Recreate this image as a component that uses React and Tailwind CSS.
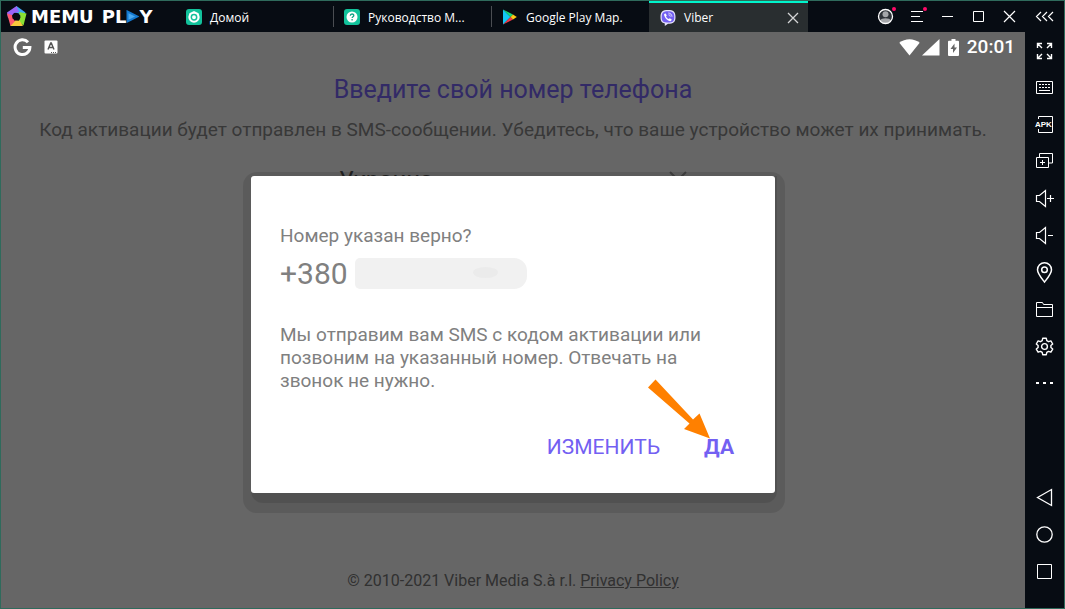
import React from 'react';

const SideIcon = ({ children }) => (
  <svg
    width="19"
    height="19"
    viewBox="0 0 19 19"
    fill="none"
    stroke="#fff"
    strokeWidth="1"
    className="overflow-visible"
    aria-hidden="true"
  >
    {children}
  </svg>
);

const tools = [
  {
    label: 'Полный экран',
    icon: (
      <g strokeWidth="1.4">
        <path d="M2.5 7V2.5H7M3 3l4 4M12 2.5h4.500V7M16 3l-4 4M2.500 13v4.500H7M3 17l4-4M12 17.500h4.500V13M16 17l-4-4" />
      </g>
    ),
  },
  {
    label: 'Клавиатура',
    icon: (
      <>
        <path d="M1.500 3.500h16v12h-16z" />
        <path d="M4 6.500h11M4 9.500h11" strokeDasharray="2 1" />
        <path d="M4 12.500h11" />
      </>
    ),
  },
  {
    label: 'Установить APK',
    icon: (
      <>
        <path d="M3.500 4V1.500h14v16h-14V14" />
        <text
          x="0"
          y="12"
          fill="#fff"
          stroke="none"
          className="font-['Liberation_Sans',sans-serif] text-[8px] font-bold"
        >
          APK
        </text>
      </>
    ),
  },
  {
    label: 'Мульти-окна',
    icon: (
      <>
        <path d="M1.500 5.500h12v10h-12zM4.500 5V1.500h13v9.500H14" />
        <path d="M7.500 8v5M5 10.500h5" />
      </>
    ),
  },
  {
    label: 'Громче',
    icon: <path d="M1.500 6.500h3L10.500 1.500v16l-6-5h-3zM12 9.500h7M15.500 6v7" strokeWidth="1.2" />,
  },
  {
    label: 'Тише',
    icon: <path d="M1.500 6.500h3L10.500 1.500v16l-6-5h-3zM13 9.500h5" strokeWidth="1.2" />,
  },
  {
    label: 'Местоположение',
    icon: (
      <g strokeWidth="1.5">
        <path d="M9.500 19C6 14.500 2.500 10.500 2.500 6.700a7 7 0 0 1 14 0C16.500 10.500 13 14.500 9.500 19z" />
        <circle cx="9.500" cy="6.700" r="2.800" />
      </g>
    ),
  },
  {
    label: 'Общая папка',
    icon: <path d="M1.500 16.500v-14h6l1 2h9v12zM1.500 7.500h16" />,
  },
  {
    label: 'Настройки',
    icon: (
      <g strokeWidth="1.4">
        <path d="M7.700 1.300h3.600l.5 2.400 1.700 1 2.400-.8 1.800 3.100-1.800 1.600v1.900l1.800 1.600-1.800 3.100-2.400-.8-1.700 1-.5 2.300H7.700l-.5-2.300-1.700-1-2.400.8-1.800-3.100 1.800-1.600V8.600L1.300 7l1.800-3.100 2.400.8 1.700-1z" strokeLinejoin="round" />
        <circle cx="9.500" cy="9.500" r="2.900" />
      </g>
    ),
  },
  {
    label: 'Ещё',
    icon: <path d="M1 9h3M8 9h3M15 9h3" strokeWidth="2" />,
  },
];

const navigation = [
  { label: 'Назад', icon: <path d="M2.500 9.500l14-8v16z" strokeWidth="1.300" /> },
  { label: 'Домой', icon: <circle cx="9.500" cy="9.500" r="7.700" strokeWidth="1.300" /> },
  { label: 'Недавние', icon: <path d="M2.500 2.500h14v14h-14z" /> },
];

const HomeIcon = () => (
  <svg width="16" height="16" viewBox="0 0 16 16" aria-hidden="true">
    <rect width="16" height="16" rx="3" fill="#12c29b" />
    <path d="M8 2l4.600 2.300 1.100 3.700a5.700 5.700 0 1 1-11.400 0l1.100-3.700z" fill="#fff" />
    <circle cx="8" cy="8.300" r="2.700" fill="none" stroke="#12c29b" strokeWidth="1.500" />
  </svg>
);

const GuideIcon = () => (
  <svg width="16" height="16" viewBox="0 0 16 16" aria-hidden="true">
    <rect width="16" height="16" rx="3" fill="#12c29b" />
    <circle cx="8" cy="8" r="5.500" fill="#fff" />
    <path d="M6.300 6.800c0-2.400 3.500-2.300 3.500-.3 0 1.300-1.700 1.200-1.700 2.600M8.100 10v1.400" fill="none" stroke="#12a586" strokeWidth="1.300" />
  </svg>
);

const PlayStoreIcon = () => (
  <svg width="16" height="16" viewBox="0 0 16 16" aria-hidden="true">
    <path d="M1 .5v15L8.500 8z" fill="#12c8f4" />
    <path d="M1 .5L8.500 8 11 5.500z" fill="#18d67a" />
    <path d="M1 15.500L8.500 8l2.500 2.500z" fill="#f03a4c" />
    <path d="M11 5.500L14.800 8 11 10.500 8.500 8z" fill="#ffc915" />
  </svg>
);

const ViberIcon = () => (
  <svg width="16" height="16" viewBox="0 0 16 16" aria-hidden="true">
    <path d="M8 0c5.500 0 7.500 1.800 7.500 7S13.500 13.800 8 13.800L4.800 16v-2.600C1.500 12.700.5 11 .5 7 .5 1.800 2.500 0 8 0z" fill="#e6e2fb" />
    <path d="M8 1.200c4.700 0 6.300 1.400 6.300 5.800s-1.600 5.600-6.300 5.600c-4.700 0-6.300-1.200-6.300-5.600S3.300 1.200 8 1.200z" fill="#7360f2" />
    <path d="M5.200 3.200l1.600 2-.8 1.300c.6 1.300 1.300 2 2.600 2.600l1.300-.8 2 1.500-1.300 1.500C7.300 10.700 4.600 7.800 4 4.500z" fill="#fff" />
    <path d="M8.300 3c2.300.2 3.500 1.500 3.700 3.700M8.500 4.800c1.200.1 1.700.7 1.800 1.800" fill="none" stroke="#fff" strokeWidth=".8" />
  </svg>
);

const tabs = [
  { title: 'Домой', Icon: HomeIcon },
  { title: 'Руководство М...', Icon: GuideIcon },
  { title: 'Google Play Map.', Icon: PlayStoreIcon },
];

const windowButtons = [
  {
    label: 'Аккаунт',
    badge: true,
    icon: (
      <>
        <circle cx="9.500" cy="9.500" r="6.500" fill="#30343a" stroke="none" />
        <circle cx="9.500" cy="7.300" r="3" fill="#a5a7aa" stroke="none" />
        <path d="M4 13.500c1.500-3 9.500-3 11 0a7 7 0 0 1-11 0z" fill="#a5a7aa" stroke="none" />
        <circle cx="9.500" cy="9.500" r="7" strokeWidth="1.300" />
      </>
    ),
  },
  { label: 'Меню', badge: true, icon: <path d="M4 4.500h12M4 9.500h9M4 14.500h12" /> },
  { label: 'Свернуть', icon: <path d="M4 9.500h11" /> },
  { label: 'Развернуть', icon: <path d="M4.500 4.500h10v10h-10z" /> },
  { label: 'Закрыть', icon: <path d="M4 4l11 11M15 4L4 15" strokeWidth="1.200" /> },
];

const TitleBar = () => (
  <header className="flex h-[31px] shrink-0 text-white">
    <div className="flex w-[174px] shrink-0 items-center pl-[5px]">
      <svg width="21" height="21" viewBox="0 0 21 21" aria-hidden="true">
        <path d="M10.500 0l9 6.500-4.500 5L13 7.500 7 6z" fill="#3fa9f5" />
        <path d="M10.500 0L1 6.500l1 5.500 4-2.500L8 7l5-1z" fill="#9a64f7" />
        <path d="M20.500 7.500l-3 12-5-4 2-4L13 6z" fill="#8ae234" />
        <path d="M17 20H4.500l.5-5 4.500-1 4 .5z" fill="#fbc93c" />
        <path d="M1 7.500l3.500 12.500L10 14l-3.500-1.500L6 9z" fill="#ff5a6e" />
        <path d="M10.500 7l4 2.800-1.600 4.700H8.100L6.500 9.800z" fill="#080c13" />
      </svg>
      <div className="flex items-center pl-1 font-['DejaVu_Sans',sans-serif] text-lg leading-5 font-bold">
        <span>MEMU</span>
        <span className="pl-2">PL</span>
        <svg width="13" height="13" viewBox="0 0 13 13" aria-hidden="true">
          <path d="M1.500 1.500v10l10-5z" fill="#4aa8ee" stroke="#1479d0" strokeWidth="2" />
        </svg>
        <span>Y</span>
      </div>
    </div>

    <nav className="flex min-w-0 font-['Open_Sans',sans-serif] text-xs">
      {tabs.map(({ title, Icon }, i) => (
        <div key={title} className="flex w-[158px] items-center">
          <span className={i > 0 ? 'h-[21px] w-px bg-[#4a4d52]' : 'h-[21px] w-px'} />
          <button type="button" className="flex h-full flex-1 items-center gap-2 pl-2.5 whitespace-nowrap">
            <Icon />
            <span className="pt-0.5">{title}</span>
          </button>
        </div>
      ))}
      <div className="flex w-[159px] items-center border-t-2 border-[#00f5cc] bg-[#292e30] pr-[9px] pl-[11px]">
        <button type="button" className="flex flex-1 items-center gap-2">
          <ViberIcon />
          <span>Viber</span>
        </button>
        <button type="button" aria-label="Закрыть вкладку">
          <svg width="12" height="12" viewBox="0 0 12 12" fill="none" stroke="#d4d5d6" strokeWidth="1.300">
            <path d="M1 1l10 10M11 1L1 11" />
          </svg>
        </button>
      </div>
    </nav>

    <div className="ml-auto flex">
      {windowButtons.map(({ label, icon, badge }) => (
        <button key={label} type="button" aria-label={label} className="relative flex w-[31px] items-center justify-center">
          <SideIcon>{icon}</SideIcon>
          {badge && <span className="absolute top-1.5 right-[5px] size-1 rounded-full bg-[#ff0a68]" />}
        </button>
      ))}
      <button type="button" aria-label="Скрыть панель" className="flex w-[39px] items-center justify-center">
        <SideIcon>
          <path d="M6 5L1.500 9.500 6 14M12 5L7.500 9.500 12 14M18 5l-4.500 4.500L18 14" strokeWidth="1.200" />
        </SideIcon>
      </button>
    </div>
  </header>
);

const StatusBar = () => (
  <div className="relative z-10 flex h-[30px] shrink-0 items-center pr-2.5 pl-3 text-white">
    <svg width="19" height="19" viewBox="0 0 19 19" fill="none" stroke="#fff" strokeWidth="3" aria-hidden="true">
      <path d="M15 4.200A7.400 7.400 0 1 0 16.900 9.500H9.800" />
    </svg>
    <svg width="14" height="14" viewBox="0 0 14 14" className="ml-3" aria-hidden="true">
      <rect width="13" height="13" x=".5" y=".5" rx="1" fill="#fff" />
      <path d="M4 9.500l2.700-6.500h.6L10 9.500M5 7.500h4" fill="none" stroke="#555" strokeWidth="1.400" />
      <path d="M7 12.500h6" stroke="#555" strokeDasharray="1 1" />
    </svg>
    <div className="ml-auto flex items-center">
      <svg width="21" height="17" viewBox="0 0 21 17" fill="#fff" aria-hidden="true">
        <path d="M.3 3.800C6-1 15-1 20.700 3.800L10.500 16.500z" />
      </svg>
      <svg width="18" height="17" viewBox="0 0 18 17" fill="#fff" className="ml-0.5" aria-hidden="true">
        <path d="M17.500 0v16.500H0z" />
      </svg>
      <svg width="11" height="17" viewBox="0 0 11 17" className="ml-2" aria-hidden="true">
        <path d="M3.500 0h4v1.700H10q1 0 1 1V16q0 1-1 1H1q-1 0-1-1V2.700q0-1 1-1h2.500z" fill="#fff" />
        <path d="M6.500 4.500L2.500 10h2.500v4l4-5.500H6.500z" fill="#666" />
      </svg>
      <span className="ml-2 text-[19px] leading-6 font-medium">20:01</span>
    </div>
  </div>
);

const ConfirmDialog = () => (
  <div className="absolute inset-0 flex items-center justify-center bg-black/60 pt-[45px] pl-0.5">
    <div className="rounded-[14px] bg-black/10 px-2 pt-1 pb-2.5">
      <div className="rounded-b-[12px] bg-black/10 pr-0.5 pb-2.5">
        <div
          role="dialog"
          aria-modal="true"
          className="relative w-[524px] rounded-[3px] bg-white pt-12 pr-[41px] pb-[30px] pl-[29px] text-[19px] leading-[23px] text-[#808080]"
        >
          <p>Номер указан верно?</p>
          <div className="mt-[9px] flex items-start gap-[7px]">
            <span className="text-[30px] leading-9">+380</span>
            <span className="mt-0.5 flex h-[31px] w-[172px] items-center justify-end rounded-l-[5px] rounded-r-[13px] bg-[#f1f1f1] pr-[29px]">
              <span className="mb-0.5 h-[11px] w-[25px] rounded-[50%] bg-[#ebebeb]" />
            </span>
          </div>
          <p className="mt-[31px] max-w-[440px]">
            Мы отправим вам SMS с кодом активации или позвоним на указанный номер. Отвечать на звонок не нужно.
          </p>
          <div className="mt-[39px] flex justify-end gap-11 text-[21px] leading-8 text-[#7360f2]">
            <button type="button">ИЗМЕНИТЬ</button>
            <button type="button" className="font-bold">ДА</button>
          </div>

          <svg
            width="62"
            height="60"
            viewBox="0 0 62 60"
            className="pointer-events-none absolute right-[65px] bottom-[54px]"
            aria-hidden="true"
          >
            <path d="M7.500.500L0 8.500 41.500 44.500 36 50 62 59.500 51.500 34.500 45 40.500z" fill="#ff8000" />
          </svg>
        </div>
      </div>
    </div>
  </div>
);

const App = () => {
  return (
    <div className="flex min-h-screen flex-col border border-[#2f6b5c] bg-[#070c13]">
      <TitleBar />
      <div className="flex flex-1">
        <main className="relative flex flex-1 flex-col bg-white font-['Roboto',sans-serif]">
          <StatusBar />
          <div className="flex flex-1 flex-col items-center pt-[13px] pb-[17px]">
            <h1 className="text-[25px] leading-[30px] text-[#7d6aff]">Введите свой номер телефона</h1>
            <p className="mt-[13px] text-[19px] leading-6 text-[#8c8c8c]">
              Код активации будет отправлен в SMS-сообщении. Убедитесь, что ваше устройство может их принимать.
            </p>
            <div className="mt-[22px] flex w-[352px] items-center">
              <select
                aria-label="Страна"
                className="h-8 flex-1 appearance-none bg-transparent pl-0.5 text-2xl leading-8 text-[#5a5a5a]"
              >
                <option>Украина</option>
              </select>
              <svg width="20" height="20" viewBox="0 0 20 20" fill="none" stroke="#a8a8a8" strokeWidth="2" aria-hidden="true">
                <path d="M1 2l8 8 8-8" />
              </svg>
            </div>
            <footer className="mt-auto text-base leading-5 text-[#7a7a7a]">
              © 2010-2021 Viber Media S.à r.l.{' '}
              <a href="#privacy" className="underline">Privacy Policy</a>
            </footer>
          </div>
          <ConfirmDialog />
        </main>

        <aside className="flex w-[39px] shrink-0 flex-col pb-[18px]">
          {tools.map(({ label, icon }) => (
            <button key={label} type="button" aria-label={label} className="flex h-[37px] items-center justify-center">
              <SideIcon>{icon}</SideIcon>
            </button>
          ))}
          <div className="mt-auto flex flex-col">
            {navigation.map(({ label, icon }) => (
              <button key={label} type="button" aria-label={label} className="flex h-[37px] items-center justify-center">
                <SideIcon>{icon}</SideIcon>
              </button>
            ))}
          </div>
        </aside>
      </div>
    </div>
  );
};

export default App;
